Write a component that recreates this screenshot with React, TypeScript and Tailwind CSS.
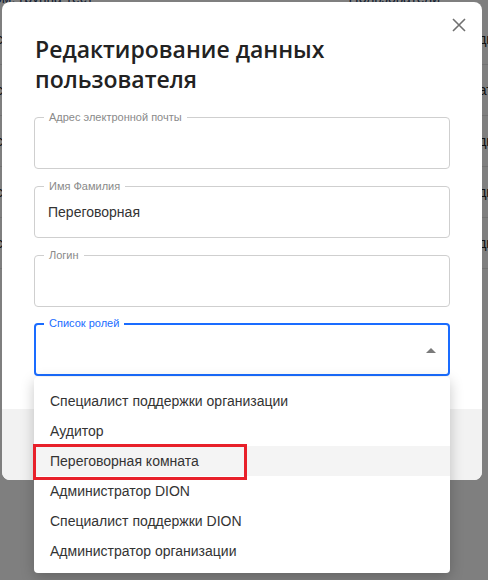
import { useState } from 'react'

const roles = [
    'Специалист поддержки организации',
    'Аудитор',
    'Переговорная комната',
    'Администратор DION',
    'Специалист поддержки DION',
    'Администратор организации',
]

const bgRows = [
    { left: 'сотрудник', right: 'Сотрудник' },
    { left: 'сотрудник', right: 'Модератор' },
    { left: 'сотрудник', right: 'Сотрудник' },
    { left: 'сотрудник', right: 'Сотрудник' },
    { left: 'сотрудник', right: 'Сотрудник' },
]

function OutlinedField({ label, value }: { label: string; value?: string }) {
    return (
        <div className="relative h-[52px] rounded-[4px] border border-[#cfcfcf]">
            <span className="absolute -top-[8px] left-[9px] bg-white px-[5px] text-[11px] leading-[14px] text-[#8a8a8a]">
                {label}
            </span>
            {value && (
                <div className="flex h-full items-center px-[13px] text-[14px] text-[#333]">{value}</div>
            )}
        </div>
    )
}

export default function App() {
    const [hovered] = useState(2)

    return (
        <div className="relative h-[580px] w-[488px] overflow-hidden bg-white font-['Liberation_Sans',Arial,sans-serif]">
            {/* Page behind the modal */}
            <div className="flex flex-col">
                <div className="-mt-[12px] flex h-[26px] items-start justify-between text-[14px] text-[#1f3b64]">
                    <span className="-ml-[6px]">ом, группа тест</span>
                    <span className="mr-[48px]">Пользователи</span>
                </div>
                {bgRows.map((r, i) => (
                    <div
                        key={i}
                        className="flex h-[51px] items-center justify-between border-b border-[#e5e5e5] text-[14px] text-[#222]"
                    >
                        <span className="-ml-[4px]">{r.left}</span>
                        <span className="-mr-[20px]">{r.right}</span>
                    </div>
                ))}
            </div>
            <div className="absolute inset-0 bg-black/50" />

            {/* Modal */}
            <div className="absolute left-[2px] top-[2px] flex h-[478px] w-[480px] flex-col rounded-[8px] bg-white">
                <button className="absolute right-[16px] top-[16px] text-[#707070]">
                    <svg width="14" height="14" viewBox="0 0 14 14" fill="none" stroke="currentColor" strokeWidth="1.6">
                        <path d="M1 1L13 13M13 1L1 13" />
                    </svg>
                </button>

                <div className="px-[32px] pt-[32px]">
                    <h2 className="ml-[1px] font-['Open_Sans',sans-serif] text-[23px] font-semibold leading-[30px] text-[#222]">
                        Редактирование данных
                        <br />
                        пользователя
                    </h2>

                    <div className="mt-[23px] flex flex-col gap-[17px]">
                        <OutlinedField label="Адрес электронной почты" />
                        <OutlinedField label="Имя Фамилия" value="Переговорная" />
                        <OutlinedField label="Логин" />

                        {/* Roles select, open */}
                        <div className="relative -mt-[1px]">
                            <div className="relative flex h-[53px] items-center justify-end rounded-[4px] border-2 border-[#1a6cff] pr-[12px]">
                                <span className="absolute -top-[9px] left-[8px] bg-white px-[5px] text-[11px] leading-[14px] text-[#1a6cff]">
                                    Список ролей
                                </span>
                                <svg width="10" height="5" viewBox="0 0 10 5" className="mt-[1px]">
                                    <path d="M0 5L5 0L10 5Z" fill="#7a7a7a" />
                                </svg>
                            </div>

                            <div className="absolute left-0 right-0 top-full z-10 mt-[1px] rounded-[4px] bg-white pb-[7px] pt-[9px] shadow-[0_4px_14px_rgba(0,0,0,0.22)]">
                                {roles.map((role, i) => (
                                    <div
                                        key={role}
                                        className={`relative flex h-[30px] items-center px-[16px] text-[14px] text-[#333] ${i === hovered ? 'bg-[#f4f4f4]' : ''}`}
                                    >
                                        {role}
                                        {i === hovered && (
                                            <span className="absolute -left-[1px] -top-[2px] h-[36px] w-[214px] border-[3px] border-[#e8202a]" />
                                        )}
                                    </div>
                                ))}
                            </div>
                        </div>
                    </div>
                </div>

                {/* Footer */}
                <div className="mt-auto h-[71px] rounded-b-[8px] bg-[#f2f2f2]" />
            </div>
        </div>
    )
}
